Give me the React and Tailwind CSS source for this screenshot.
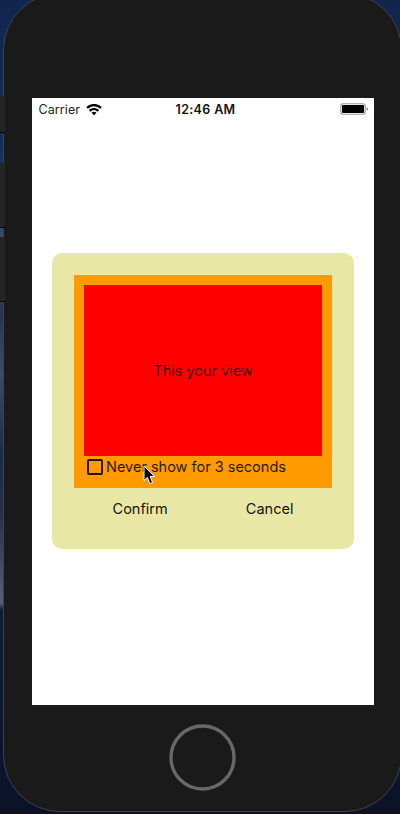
import React from "react";

function WifiIcon() {
  return (
    <svg className="ml-[5px] h-[12px] w-[16px]" viewBox="0 0 16 12" fill="none" stroke="#000" strokeWidth="2.3">
      <path d="M1 3.9C5 .1 11 .1 15 3.9" />
      <path d="M3.6 6.8c2.5-2.3 6.3-2.3 8.8 0" />
      <path d="M8 11.2 5.5 8.8c1.4-1.3 3.6-1.3 5 0Z" fill="#000" stroke="none" />
    </svg>
  );
}

function StatusBar() {
  return (
    <div className="grid h-[22px] grid-cols-[143.5px_1fr_34px] items-center">
      <div className="flex items-center pl-[6.5px]">
        <span className="w-[42px] whitespace-nowrap pt-[1px] text-[12.5px] leading-[22px] tracking-[0.1px] text-[#222]">Carrier</span>
        <WifiIcon />
      </div>
      <span className="whitespace-nowrap pt-[1px] text-[12.5px] font-semibold leading-[22px] tracking-[0.35px] text-[#111]">12:46 AM</span>
      <svg className="h-[13px] w-[30px]" viewBox="0 0 30 13">
        <rect x="0.75" y="0.75" width="24.5" height="10.5" rx="2.5" fill="#fff" stroke="#999" strokeWidth="1.1" />
        <rect x="2" y="2" width="22" height="8" rx="1" fill="#000" />
        <path d="M26.6 4.2c2 .8 2 2.8 0 3.6Z" fill="#888" />
      </svg>
    </div>
  );
}

function Dialog() {
  return (
    <div className="ml-[20.4px] mt-[133.4px] h-[296px] w-[301.3px] rounded-[10px] bg-[#e8e7a5] pt-[21.6px]">
      <div className="ml-[21.2px] h-[213.5px] w-[258.4px] bg-[#ff9a00] pl-[10.8px] pt-[10.5px]">
        <div className="flex h-[171px] w-[237.4px] items-center justify-center bg-[#ff0000] text-[14.5px] text-[#4a0500]">
          <span className="-mt-[1px] whitespace-nowrap">This your view</span>
        </div>
        <label className="flex h-[21px] items-center pl-[2.6px]">
          <span className="h-[16px] w-[16px] shrink-0 rounded-[2px] border-2 border-[#25150a]" />
          <span className="ml-[3px] whitespace-nowrap text-[14.5px] text-[#2b1805]">Never show for 3 seconds</span>
        </label>
      </div>
      <div className="ml-[21px] grid h-[40px] w-[259px] grid-cols-2 items-center text-[14.5px] text-[#14140c]">
        <button className="pl-[4px]">Confirm</button>
        <button className="pl-[4px]">Cancel</button>
      </div>
    </div>
  );
}

export default function App() {
  return (
    <div className="h-[814px] w-[400px] overflow-hidden bg-[linear-gradient(to_bottom,#10264d_0px,#142b55_130px,#1c376a_210px,#394a6b_236px,#273552_315px,#404a68_375px,#1c2947_455px,#2a304b_515px,#595f78_603px,#101b36_610px,#0b1228_814px)] font-['Inter','Liberation_Sans',sans-serif]">
      <div className="relative -mt-[7px] ml-[3px] h-[819px] w-[399px] rounded-[57px] border border-[#3d4251] bg-[#1a1a1a] pl-[28px] pt-[104px]">
        <i className="absolute -left-[4px] top-[102px] h-[37px] w-[5px] border-b border-black bg-[#252525]" />
        <i className="absolute -left-[4px] top-[169px] h-[65px] w-[5px] border-b border-black bg-[#252525]" />
        <i className="absolute -left-[4px] top-[243px] h-[65px] w-[5px] border-b border-black bg-[#252525]" />
        <div className="flow-root h-[607px] w-[342px] bg-white">
          <StatusBar />
          <Dialog />
        </div>
        <svg className="ml-[137px] mt-[19px] h-[67px] w-[67px]" viewBox="0 0 67 67">
          <circle cx="33.5" cy="33.5" r="31.5" fill="none" stroke="#686868" strokeWidth="3.4" />
        </svg>
        <svg className="absolute left-[139px] top-[471px] h-[20px] w-[14px]" viewBox="0 0 14 20">
          <path d="M1 1v14.5l3.4-3.1 2.4 6.2 2.8-1.1-2.5-6h4.6Z" fill="#000" stroke="#fff" strokeWidth="1" />
        </svg>
      </div>
      <div className="h-[2px] bg-[#16101c]" />
    </div>
  );
}
